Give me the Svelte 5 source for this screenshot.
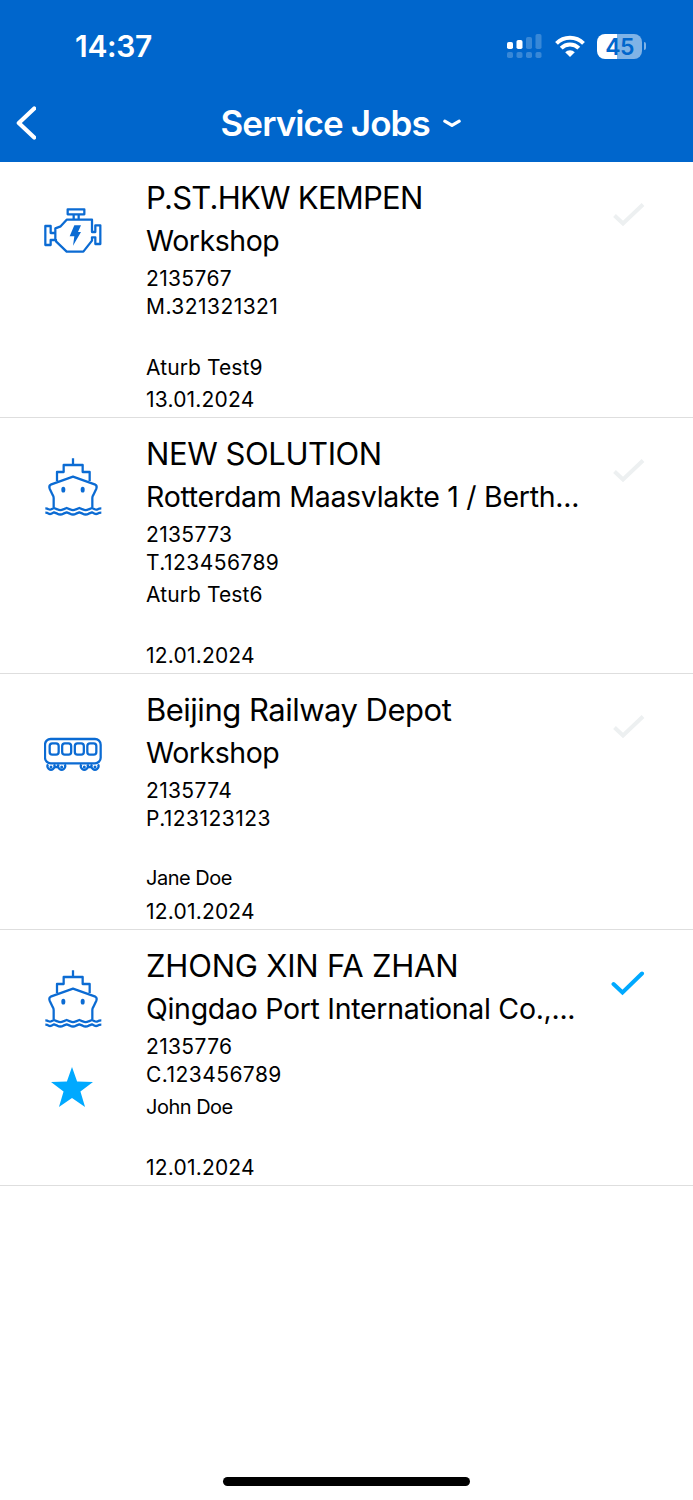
<script>
	const jobs = [
		{
			icon: 'engine',
			title: 'P.ST.HKW KEMPEN',
			titleTracking: -0.75,
			place: 'Workshop',
			placeTracking: -0.45,
			number: '2135767',
			serial: 'M.321321321',
			contact: '',
			engineer: 'Aturb Test9',
			date: '13.01.2024'
		},
		{
			icon: 'ship',
			title: 'NEW SOLUTION',
			titleTracking: -0.42,
			place: 'Rotterdam Maasvlakte 1 / Berth...',
			placeTracking: -0.28,
			number: '2135773',
			serial: 'T.123456789',
			contact: 'Aturb Test6',
			engineer: '',
			date: '12.01.2024'
		},
		{
			icon: 'train',
			title: 'Beijing Railway Depot',
			titleTracking: -0.5,
			place: 'Workshop',
			placeTracking: -0.45,
			number: '2135774',
			serial: 'P.123123123',
			contact: '',
			engineer: 'Jane Doe',
			compact: true,
			date: '12.01.2024'
		},
		{
			icon: 'ship',
			title: 'ZHONG XIN FA ZHAN',
			titleTracking: -0.2,
			place: 'Qingdao Port International Co.,...',
			placeTracking: -0.3,
			number: '2135776',
			serial: 'C.123456789',
			contact: 'John Doe',
			engineer: '',
			compact: true,
			date: '12.01.2024',
			starred: true,
			done: true
		}
	];
</script>

<div class="screen">
	<header class="header">
		<div class="status-bar">
			<span class="time">14:37</span>
			<div class="status-icons">
				<svg class="signal" viewBox="0 0 35 25" aria-hidden="true">
					<g fill="#fff">
						<rect x="0" y="8" width="6" height="7" rx="1.8" />
						<rect x="9.5" y="6" width="6" height="9" rx="1.8" />
						<g opacity="0.22">
							<rect x="19" y="3" width="6" height="12" rx="1.8" />
							<rect x="28.5" y="0" width="6" height="15" rx="1.8" />
							<rect x="0" y="18" width="6" height="6" rx="1.8" />
							<rect x="9.5" y="18" width="6" height="6" rx="1.8" />
							<rect x="19" y="18" width="6" height="6" rx="1.8" />
							<rect x="28.5" y="18" width="6" height="6" rx="1.8" />
						</g>
					</g>
				</svg>
				<svg class="wifi" viewBox="0 0 30 22" aria-hidden="true">
					<g fill="none" stroke="#fff" stroke-width="4">
						<path d="M1.5 8.3a19.2 19.2 0 0 1 27 0" />
						<path d="M6.2 13.2a12.4 12.4 0 0 1 17.6 0" />
					</g>
					<path d="M10.2 17.2a6.8 6.8 0 0 1 9.6 0L15 22z" fill="#fff" />
				</svg>
				<div class="battery">
					<span class="battery-level">45</span>
					<span class="battery-cap"></span>
				</div>
			</div>
		</div>
		<nav class="nav-bar">
			<button class="back" aria-label="Back">
				<svg viewBox="0 0 20 34" width="20" height="34">
					<path d="M18.2 2.5 2.8 17l15.4 14.5" fill="none" stroke="#fff" stroke-width="4.2" stroke-linecap="round" stroke-linejoin="round" />
				</svg>
			</button>
			<h1>Service Jobs</h1>
			<svg class="chevron" viewBox="0 0 18 9" aria-hidden="true">
				<path d="M1.8 2.2 9 6.4l7.2-4.2" fill="none" stroke="#fff" stroke-width="3.2" stroke-linecap="round" stroke-linejoin="round" />
			</svg>
		</nav>
	</header>

	<main>
		{#each jobs as job}
			<article class="job">
				<div class="job-icons">
					{#if job.icon === 'engine'}
						<svg class="type-icon" viewBox="42 36 174 174">
							<path d="M113 58h50v15h-50zM131 73v15M146 73v15M110 89h76v37h10v-20h15v56h-15v-20h-10v10l-26 33h-50l-32-31V150H62v15H46v-57h16v21h14v-14l16-6zM76 129v21" />
							<path class="solid" d="M133 106h20l-9 20h9l-24 41 4-28h-14z" />
						</svg>
					{:else if job.icon === 'ship'}
						<svg class="type-icon" viewBox="42 39 174 174">
							<path d="M129 40v20M81 108V81h20V60h57v21h21v27M71 187v-28q0-5-3-9l-9-19q-3-9 3-12l67-24 67 24q6 3 3 12l-9 19q-3 4-3 9v28" />
							{#each [190, 203] as y}
								<path d="M46 {y}q6 0 10 3 4 2 8 0l8-4 10 4q9 5 18 0l10-4 10 4q9 5 18 0l10-4 10 4q9 5 18 0l10-4 8 4q4 2 9 0 4-3 11-3" />
							{/each}
							<ellipse class="solid" cx="100" cy="134" rx="6" ry="8.5" />
							<ellipse class="solid" cx="158" cy="134" rx="6" ry="8.5" />
						</svg>
					{:else}
						<svg class="type-icon" viewBox="42 -18 174 174">
							<rect x="45" y="57" width="167" height="73" rx="17" />
							{#each [59, 96.5, 134.5, 172] as x}
								<rect {x} y="70" width="27" height="34" rx="8" />
							{/each}
							{#each [63, 95, 163, 195] as cx}
								<path d="M{cx - 9} 133a10.500 10.500 0 1 0 18 0" />
								<circle class="solid" {cx} cy="141" r="4.5" />
							{/each}
							<path d="M73 141h12M173 141h12" />
						</svg>
					{/if}
					{#if job.starred}
						<svg class="star" viewBox="0 0 127 121">
							<path d="M63.5 0 79 44l48 1-38 29 14 47-39.5-27L24 121l14-47L0 45l48-1z" fill="#00a9ff" />
						</svg>
					{/if}
				</div>
				<div class="job-text">
					<h2 style="letter-spacing: {job.titleTracking}px">{job.title}</h2>
					<p class="place" style="letter-spacing: {job.placeTracking}px">{job.place}</p>
					<p class="number">{job.number}</p>
					<p class="serial">{job.serial}</p>
					<p class:compact={job.compact}>{job.contact}</p>
					<p class="engineer" class:compact={job.compact}>{job.engineer}</p>
					<p class="date">{job.date}</p>
				</div>
				<svg class="check" class:done={job.done} viewBox="0 0 34 26">
					{#if job.done}
						<path d="M2.5 14 11.5 22.5 31 3.5" />
					{:else}
						<path d="M3.5 13.5 12 21.5 32 2.5" />
					{/if}
				</svg>
			</article>
		{/each}
	</main>

	<div class="home-indicator"></div>
</div>

<style>
	:global(body) {
		background: #fff;
	}

	.screen {
		height: 1500px;
		display: flex;
		flex-direction: column;
		overflow: hidden;
		font-family: Inter, 'Liberation Sans', sans-serif;
		color: #000;
	}

	.header {
		height: 162px;
		box-sizing: border-box;
		background: #0066cc;
		color: #fff;
	}

	.status-bar {
		height: 92px;
		padding: 0 47px 0 75px;
		display: flex;
		align-items: center;
		justify-content: space-between;
	}

	.time {
		font-size: 30px;
		font-weight: 600;
		letter-spacing: -0.3px;
	}

	.status-icons {
		display: flex;
		align-items: center;
	}

	.signal {
		width: 35px;
		height: 25px;
		margin-right: 13px;
	}

	.wifi {
		width: 30px;
		height: 22px;
		margin-right: 12px;
	}

	.battery {
		display: flex;
		align-items: center;
		gap: 2px;
	}

	.battery-level {
		width: 45px;
		height: 25px;
		border-radius: 8px;
		background: linear-gradient(to right, #fff 45%, #80b3e6 45%);
		color: #0066cc;
		font-size: 23px;
		font-weight: 600;
		letter-spacing: -0.6px;
		line-height: 26px;
		text-align: center;
	}

	.battery-cap {
		width: 2px;
		height: 8px;
		border-radius: 0 2px 2px 0;
		background: #80b3e6;
	}

	.nav-bar {
		height: 62px;
		display: flex;
		align-items: center;
	}

	.back {
		width: 220.5px;
		padding: 0 0 0 16px;
		border: 0;
		background: none;
		display: flex;
	}

	h1 {
		margin: 0;
		font-size: 35px;
		font-weight: 600;
		letter-spacing: -0.9px;
	}

	.chevron {
		width: 18px;
		height: 9px;
		margin-left: 13px;
	}

	.job {
		height: 256px;
		box-sizing: border-box;
		padding: 15px 48px 0 44px;
		border-bottom: 1px solid #dedede;
		display: flex;
		align-items: flex-start;
	}

	.job-icons {
		width: 58px;
		margin: 25px 44px 0 0;
		display: flex;
		flex-direction: column;
		gap: 39px;
	}

	.type-icon {
		width: 58px;
		height: 58px;
		fill: none;
		stroke: #0b6bd3;
		stroke-width: 6.8;
		stroke-linejoin: round;
	}

	.type-icon .solid {
		fill: #0b6bd3;
		stroke: none;
	}

	.star {
		width: 42px;
		height: 40px;
		margin-left: 7px;
	}

	.job-text {
		flex: 1;
		display: grid;
		grid-template-rows: 42px 45px 28px 32px 30px 31px 32px;
		white-space: nowrap;
	}

	h2,
	p {
		margin: 0;
		font-weight: 400;
	}

	h2 {
		font-size: 31px;
		line-height: 42px;
	}

	p {
		font-size: 21px;
		line-height: 30px;
		letter-spacing: 0.1px;
	}

	.place {
		font-size: 28.5px;
		line-height: 43px;
	}

	.number {
		letter-spacing: 0.35px;
	}

	.serial {
		letter-spacing: 0.45px;
	}

	.engineer {
		line-height: 28px;
	}

	.date {
		letter-spacing: 0.2px;
	}

	.compact {
		font-size: 20px;
		letter-spacing: -0.5px;
	}

	.engineer.compact {
		line-height: 24px;
	}

	.check {
		width: 34px;
		height: 26px;
		margin-top: 25px;
		fill: none;
		stroke: #edf0f1;
		stroke-width: 4;
	}

	.check.done {
		stroke: #00a9ff;
		stroke-linecap: round;
	}

	.home-indicator {
		width: 247px;
		height: 9px;
		margin: auto auto 14px;
		border-radius: 5px;
		background: #000;
	}
</style>
